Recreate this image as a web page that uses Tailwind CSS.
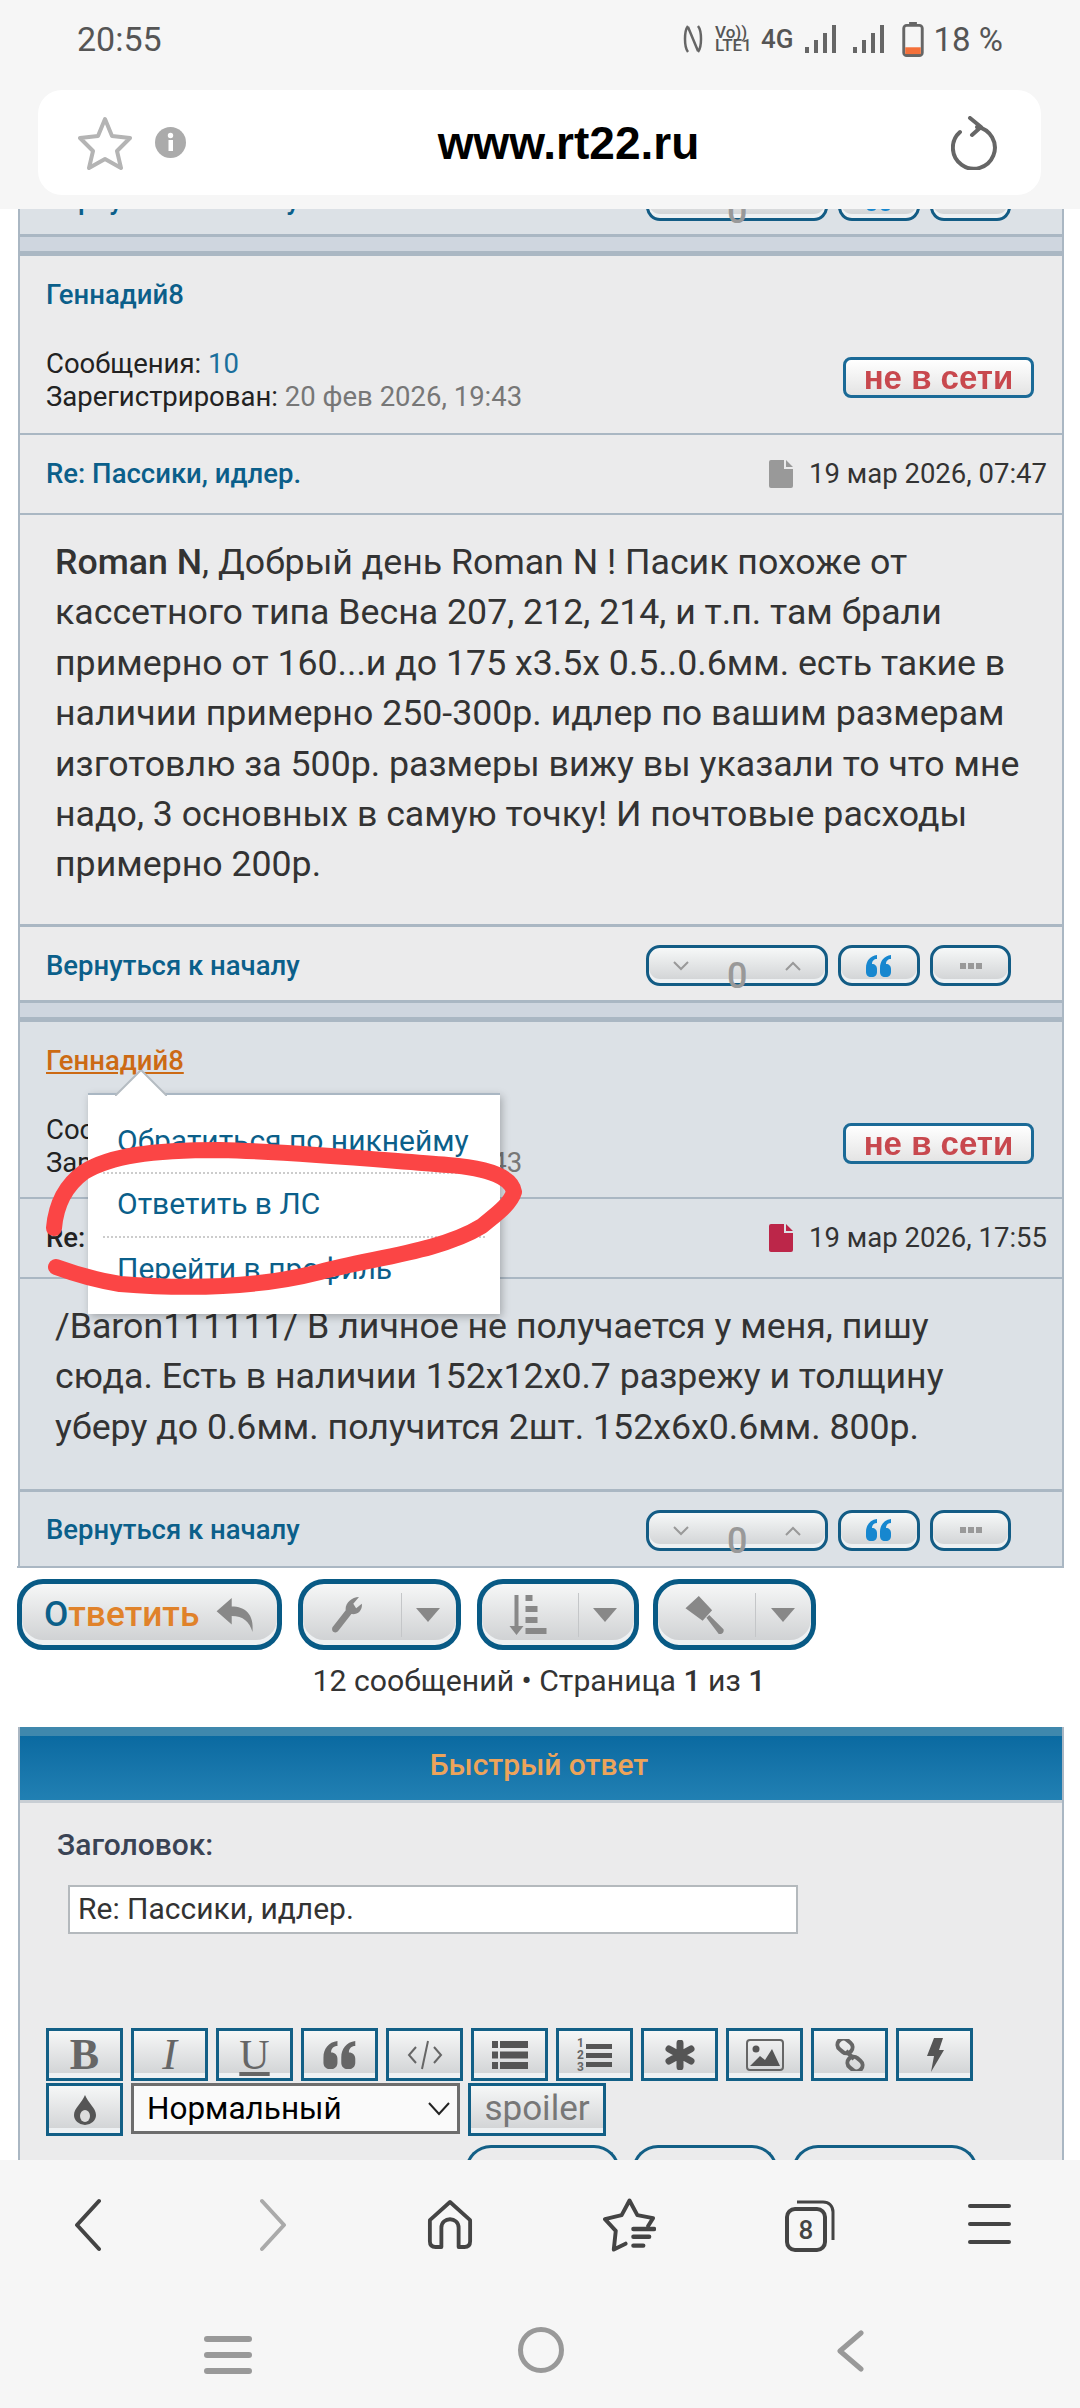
<!DOCTYPE html>
<html lang="ru">
<head>
  <meta charset="UTF-8">
  <meta name="viewport" content="width=device-width, initial-scale=1.0">
  <script src="https://cdn.jsdelivr.net/npm/@tailwindcss/browser@4"></script>
  <title>www.rt22.ru</title>
</head>
<body class="bg-white">
  <svg class="hidden">
    <symbol id="quote" viewBox="0 0 26 22"><path d="M11 0C4 1 0 6 0 13v4c0 3 2 5 5 5h1c3 0 5-2 5-5v-3c0-3-2-5-5-5 0-3 2-5 5-5zM25 0c-7 1-11 6-11 13v4c0 3 2 5 5 5h1c3 0 5-2 5-5v-3c0-3-2-5-5-5 0-3 2-5 5-5z"/></symbol>
    <symbol id="doc" viewBox="0 0 24 28"><path d="M2 0h13v9h9v17a2 2 0 0 1-2 2H2a2 2 0 0 1-2-2V2a2 2 0 0 1 2-2zM17 0l7 7h-7z"/></symbol>
    <symbol id="signal" viewBox="0 0 32 28"><rect x="0" y="22" width="4" height="6"/><rect x="9" y="15" width="4" height="13"/><rect x="18" y="8" width="4" height="20"/><rect x="27" y="0" width="4" height="28"/></symbol>
  </svg>

  <div class="relative w-[1080px] h-[2408px] flex flex-col overflow-hidden font-['Roboto',sans-serif]">

    <!-- status bar + address bar -->
    <header class="h-[209px] shrink-0 bg-[#f6f6f6] z-10">
      <div class="h-[78px] pl-[77px] pr-[77px] flex items-center justify-between text-[#555]">
        <span class="text-[34px] leading-none">20:55</span>
        <div class="flex items-center">
          <svg class="w-[20px] h-[36px]" viewBox="0 0 20 36" fill="none" stroke="#666" stroke-width="2.5"><path d="M5 5C1 10 1 26 5 31M15 5c4 5 4 21 0 26M5 6l10 24"/></svg>
          <div class="ml-[12px] w-[38px] text-[17px] leading-[13px] font-medium text-[#555]"><div>Vo))</div><div>LTE1</div></div>
          <span class="ml-[8px] text-[26px] leading-none font-medium">4G</span>
          <svg class="ml-[11px] w-[32px] h-[28px] fill-[#666]"><use href="#signal"/></svg>
          <svg class="ml-[16px] w-[32px] h-[28px] fill-[#666]"><use href="#signal"/></svg>
          <svg class="ml-[17px] w-[22px] h-[35px]" viewBox="0 0 22 36"><rect x="7" y="0" width="8" height="4" fill="#666"/><rect x="1.500" y="3.500" width="19" height="31" rx="3" fill="none" stroke="#666" stroke-width="3"/><rect x="3" y="26" width="16" height="7" fill="#f4703a"/></svg>
          <span class="ml-[10px] text-[33px] leading-none">18 %</span>
        </div>
      </div>
      <div class="mx-[38px] mt-[12px] w-[1003px] h-[105px] rounded-[24px] bg-white flex items-center justify-between pl-[40px] pr-[42px]">
        <div class="flex items-center">
          <svg class="w-[54px] h-[54px]" viewBox="0 0 54 54" fill="none" stroke="#b4b4b4" stroke-width="4" stroke-linejoin="round"><path d="M27 3l7 17 18 2-13 13 4 17-16-9-16 9 4-17L2 22l18-2z"/></svg>
          <svg class="ml-[23px] w-[31px] h-[31px]" viewBox="0 0 31 31"><circle cx="15.500" cy="15.500" r="15.500" fill="#ababab"/><rect x="13.500" y="13" width="4.500" height="11" fill="#fff"/><circle cx="15.500" cy="8.500" r="2.700" fill="#fff"/></svg>
        </div>
        <span class="font-['Liberation_Sans',sans-serif] font-bold text-[46px] leading-none text-black">www.rt22.ru</span>
        <svg class="w-[48px] h-[54px]" viewBox="0 0 48 54" fill="none" stroke="#666" stroke-width="4" stroke-linecap="round" stroke-linejoin="round"><path d="M26 11A21 21 0 1 1 9 16"/><path d="M19 2l11 9-9 8"/></svg>
      </div>
    </header>

    <!-- page content -->
    <main class="flex-1 overflow-hidden">
      <div class="-mt-[47px]">
        <div class="ml-[18px] w-[1046px] border-x-2 border-[#aab7c3]">
          <div class="h-[75px] pt-[4px] bg-[#dce1e6] border-b-[3px] border-[#aab7c3] flex items-center justify-between pl-[26px] pr-[51px]">
            <a class="text-[27.500px] font-medium text-[#0b5f8a]">Вернуться к началу</a>
            <div class="flex items-center gap-[10px]">
              <div class="relative w-[182px] h-[41px] rounded-[14px] border-[3px] border-[#135c85] bg-gradient-to-b from-[#f6f8f8] to-[#cfd1d3] shadow-[inset_0_-4px_0_#eef1f3]"><span class="absolute left-[78px] top-[8px] text-[36px] leading-[40px] font-medium text-[#999]">0</span></div>
              <div class="w-[82px] h-[41px] rounded-[14px] border-[3px] border-[#135c85] bg-gradient-to-b from-[#f6f8f8] to-[#cfd1d3] shadow-[inset_0_-4px_0_#eef1f3] flex items-center justify-center"><svg class="w-[26px] h-[22px] fill-[#1787cf]"><use href="#quote"/></svg></div>
              <div class="w-[81px] h-[41px] rounded-[14px] border-[3px] border-[#135c85] bg-gradient-to-b from-[#f6f8f8] to-[#cfd1d3] shadow-[inset_0_-4px_0_#eef1f3]"></div>
            </div>
          </div>
          <div class="h-[14px] bg-[#cfd6df]"></div>
          <div class="h-[5px] bg-[#aab7c3]"></div>

          <!-- post 1 -->
          <article class="bg-[#ebebec]">
            <div class="h-[179px] border-b-[2px] border-[#aab7c3] pl-[26px] pr-[28px]">
              <a class="block pt-[23px] text-[27.500px] leading-[32px] font-medium text-[#0b5f8a]">Геннадий8</a>
              <div class="flex items-center justify-between mt-[36px]">
                <div class="text-[27.500px] leading-[33px] text-[#222]">
                  <div>Сообщения: <span class="text-[#1a6f9c]">10</span></div>
                  <div>Зарегистрирован: <span class="text-[#777]">20 фев 2026, 19:43</span></div>
                </div>
                <div class="-mt-[5px] w-[191px] h-[41px] rounded-[8px] border-[3px] border-[#1b6a97] bg-gradient-to-b from-white to-[#e4e4e4] flex items-center justify-center font-['Liberation_Sans',sans-serif] font-bold text-[33px] leading-none text-[#c8484e] blur-[0.7px]">не в сети</div>
              </div>
            </div>
            <div class="h-[80px] border-b-[2px] border-[#aab7c3] flex items-center justify-between pl-[26px] pr-[15px]">
              <a class="text-[27.500px] font-medium text-[#0b5f8a]">Re: Пассики, идлер.</a>
              <div class="flex items-center gap-[16px] text-[27.500px] text-[#333]">
                <svg class="w-[24px] h-[28px] fill-[#999]"><use href="#doc"/></svg>
                <span>19 мар 2026, 07:47</span>
              </div>
            </div>
            <div class="h-[412px] border-b-[3px] border-[#aab7c3] pl-[35px] pr-[30px] pt-[22px] text-[35.700px] leading-[50.400px] text-[#333]">
              <b class="font-medium">Roman N</b>, Добрый день Roman N ! Пасик похоже от кассетного типа Весна 207, 212, 214, и т.п. там брали примерно от 160...и до 175 x3.5x 0.5..0.6мм. есть такие в наличии примерно 250-300р. идлер по вашим размерам изготовлю за 500р. размеры вижу вы указали то что мне надо, 3 основных в самую точку! И почтовые расходы примерно 200р.
            </div>
            <div class="h-[76px] pt-[4px] border-b-[3px] border-[#aab7c3] flex items-center justify-between pl-[26px] pr-[51px]">
              <a class="text-[27.500px] font-medium text-[#0b5f8a]">Вернуться к началу</a>
              <div class="flex items-center gap-[10px]">
                <div class="relative w-[182px] h-[41px] rounded-[14px] border-[3px] border-[#135c85] bg-gradient-to-b from-[#f6f8f8] to-[#cfd1d3] shadow-[inset_0_-4px_0_#eef1f3]">
                  <svg class="absolute left-[24px] top-[13px] w-[16px] h-[10px]" viewBox="0 0 16 10" fill="none" stroke="#999" stroke-width="2"><path d="M1 1l7 7 7-7"/></svg>
                  <svg class="absolute right-[24px] top-[13px] w-[16px] h-[10px]" viewBox="0 0 16 10" fill="none" stroke="#999" stroke-width="2"><path d="M1 9l7-7 7 7"/></svg>
                  <span class="absolute left-[78px] top-[8px] text-[36px] leading-[40px] font-medium text-[#999]">0</span>
                </div>
                <div class="w-[82px] h-[41px] rounded-[14px] border-[3px] border-[#135c85] bg-gradient-to-b from-[#f6f8f8] to-[#cfd1d3] shadow-[inset_0_-4px_0_#eef1f3] flex items-center justify-center"><svg class="w-[26px] h-[22px] fill-[#1787cf]"><use href="#quote"/></svg></div>
                <div class="w-[81px] h-[41px] rounded-[14px] border-[3px] border-[#135c85] bg-gradient-to-b from-[#f6f8f8] to-[#cfd1d3] shadow-[inset_0_-4px_0_#eef1f3] flex items-center justify-center gap-[2px]"><i class="w-[6px] h-[6px] bg-[#999]"></i><i class="w-[6px] h-[6px] bg-[#999]"></i><i class="w-[6px] h-[6px] bg-[#999]"></i></div>
              </div>
            </div>
          </article>
          <div class="h-[14px] bg-[#cfd6df]"></div>
          <div class="h-[5px] bg-[#aab7c3]"></div>

          <!-- post 2 -->
          <article class="relative bg-[#dce1e6]">
            <div class="h-[177px] border-b-[2px] border-[#aab7c3] pl-[26px] pr-[28px]">
              <a class="block pt-[23px] text-[27.500px] leading-[32px] font-medium text-[#cc6a14] underline underline-offset-2">Геннадий8</a>
              <div class="flex items-center justify-between mt-[36px]">
                <div class="text-[27.500px] leading-[33px] text-[#222]">
                  <div>Сообщения: <span class="text-[#1a6f9c]">10</span></div>
                  <div>Зарегистрирован: <span class="text-[#777]">20 фев 2026, 19:43</span></div>
                </div>
                <div class="-mt-[5px] w-[191px] h-[41px] rounded-[8px] border-[3px] border-[#1b6a97] bg-gradient-to-b from-white to-[#e4e4e4] flex items-center justify-center font-['Liberation_Sans',sans-serif] font-bold text-[33px] leading-none text-[#c8484e] blur-[0.7px]">не в сети</div>
              </div>
            </div>
            <div class="h-[80px] border-b-[2px] border-[#aab7c3] flex items-center justify-between pl-[26px] pr-[15px]">
              <a class="text-[27.500px] font-medium text-[#222]">Re: Пассики, идлер.</a>
              <div class="flex items-center gap-[16px] text-[27.500px] text-[#333]">
                <svg class="w-[24px] h-[28px] fill-[#bc2649]"><use href="#doc"/></svg>
                <span>19 мар 2026, 17:55</span>
              </div>
            </div>
            <div class="h-[213px] border-b-[3px] border-[#aab7c3] pl-[35px] pr-[30px] pt-[22px] text-[35.700px] leading-[50.400px] text-[#333]">
              /Baron111111/ В личное не получается у меня, пишу сюда. Есть в наличии 152x12x0.7 разрежу и толщину уберу до 0.6мм. получится 2шт. 152x6x0.6мм. 800р.
            </div>
            <div class="h-[74px] pt-[2px] flex items-center justify-between pl-[26px] pr-[51px]">
              <a class="text-[27.500px] font-medium text-[#0b5f8a]">Вернуться к началу</a>
              <div class="flex items-center gap-[10px]">
                <div class="relative w-[182px] h-[41px] rounded-[14px] border-[3px] border-[#135c85] bg-gradient-to-b from-[#f6f8f8] to-[#cfd1d3] shadow-[inset_0_-4px_0_#eef1f3]">
                  <svg class="absolute left-[24px] top-[13px] w-[16px] h-[10px]" viewBox="0 0 16 10" fill="none" stroke="#999" stroke-width="2"><path d="M1 1l7 7 7-7"/></svg>
                  <svg class="absolute right-[24px] top-[13px] w-[16px] h-[10px]" viewBox="0 0 16 10" fill="none" stroke="#999" stroke-width="2"><path d="M1 9l7-7 7 7"/></svg>
                  <span class="absolute left-[78px] top-[8px] text-[36px] leading-[40px] font-medium text-[#999]">0</span>
                </div>
                <div class="w-[82px] h-[41px] rounded-[14px] border-[3px] border-[#135c85] bg-gradient-to-b from-[#f6f8f8] to-[#cfd1d3] shadow-[inset_0_-4px_0_#eef1f3] flex items-center justify-center"><svg class="w-[26px] h-[22px] fill-[#1787cf]"><use href="#quote"/></svg></div>
                <div class="w-[81px] h-[41px] rounded-[14px] border-[3px] border-[#135c85] bg-gradient-to-b from-[#f6f8f8] to-[#cfd1d3] shadow-[inset_0_-4px_0_#eef1f3] flex items-center justify-center gap-[2px]"><i class="w-[6px] h-[6px] bg-[#999]"></i><i class="w-[6px] h-[6px] bg-[#999]"></i><i class="w-[6px] h-[6px] bg-[#999]"></i></div>
              </div>
            </div>

            <!-- profile popup -->
            <div class="absolute left-[68px] top-[71px] w-[412px] h-[221px] bg-white border-t-2 border-[#aab7c3] shadow-[2px_3px_8px_rgba(0,0,0,0.25)] pt-[21px] px-[15px] text-[30px] text-[#0b5f8a]">
              <svg class="absolute left-[27px] -top-[25px] w-[52px] h-[26px]" viewBox="0 0 52 26"><path d="M0 26L26 0l26 26z" fill="#fff"/><path d="M0 26L26 0l26 26" fill="none" stroke="#b5bcc2" stroke-width="2"/></svg>
              <div class="h-[58px] pl-[14px] leading-[50px] border-b-2 border-dotted border-[#ccc]">Обратиться по никнейму</div>
              <div class="h-[64px] pl-[14px] leading-[60px] border-b-2 border-dotted border-[#ccc]">Ответить в ЛС</div>
              <div class="pl-[14px] leading-[62px]">Перейти в профиль</div>
            </div>
          </article>
        </div>
        <div class="ml-[17px] w-[1047px] h-[2px] bg-[#aab7c3]"></div>

        <!-- action buttons -->
        <div class="mt-[11px] ml-[17px] flex gap-[16px]">
          <div class="w-[265px] h-[71px] rounded-[26px] border-[5px] border-[#085a85] bg-gradient-to-b from-[#f6f7f7] to-[#cdcfd1] shadow-[inset_0_-5px_0_#eef1f3] flex items-center pl-[22px] text-[35.300px] font-medium text-[#e0822a]">
            <span><span class="text-[#0b5f8a]">О</span>тветить</span>
            <svg class="ml-[17px] w-[39px] h-[34px] fill-[#888]" viewBox="0 0 40 36"><path d="M0 14L16 0v9c14 0 24 8 22 27-3-11-10-17-22-17v9z"/></svg>
          </div>
          <div class="w-[163px] h-[71px] rounded-[26px] border-[5px] border-[#085a85] bg-gradient-to-b from-[#f6f7f7] to-[#cdcfd1] shadow-[inset_0_-5px_0_#eef1f3] flex items-center pl-[29px]">
            <svg class="w-[35px] h-[36px] fill-[#888]" viewBox="0 0 36 38"><path d="M28 0l-6 7 3 5 6-5c1 7-4 12-11 11L6 36c-2 3-8 1-6-4l14-18C13 7 20 0 28 0z"/></svg>
            <span class="ml-[34px] w-[1px] h-[44px] bg-[#c4c6c8]"></span>
            <svg class="ml-[14px] w-[24px] h-[14px] fill-[#888]" viewBox="0 0 24 14"><path d="M0 0h24L12 14z"/></svg>
          </div>
          <div class="w-[162px] -mr-[2px] h-[71px] rounded-[26px] border-[5px] border-[#085a85] bg-gradient-to-b from-[#f6f7f7] to-[#cdcfd1] shadow-[inset_0_-5px_0_#eef1f3] flex items-center pl-[26px]">
            <svg class="w-[39px] h-[40px] fill-[#888]" viewBox="0 0 38 40"><path d="M6 0h4v31h5l-7 9-7-9h5zM17 0h7v6h-7zM17 11h12v6H17zM17 22h12v6H17zM17 33h21v6H17z"/></svg>
            <span class="ml-[31px] w-[1px] h-[44px] bg-[#c4c6c8]"></span>
            <svg class="ml-[14px] w-[24px] h-[14px] fill-[#888]" viewBox="0 0 24 14"><path d="M0 0h24L12 14z"/></svg>
          </div>
          <div class="w-[163px] h-[71px] rounded-[26px] border-[5px] border-[#085a85] bg-gradient-to-b from-[#f6f7f7] to-[#cdcfd1] shadow-[inset_0_-5px_0_#eef1f3] flex items-center pl-[27px]">
            <svg class="w-[39px] h-[38px] fill-[#888]" viewBox="0 0 40 40"><path d="M14 0l14 15-10 11L0 13zM22 23l3-3 15 15c1 3-2 6-5 5z"/></svg>
            <span class="ml-[31px] w-[1px] h-[44px] bg-[#c4c6c8]"></span>
            <svg class="ml-[15px] w-[24px] h-[14px] fill-[#888]" viewBox="0 0 24 14"><path d="M0 0h24L12 14z"/></svg>
          </div>
        </div>
        <div class="mt-[13px] pr-[2px] text-center text-[30.200px] leading-[36px] text-[#333]">12 сообщений • Страница <b class="font-medium">1</b> из <b class="font-medium">1</b></div>

        <!-- quick reply -->
        <section class="mt-[28px] ml-[18px] w-[1046px] border-x-2 border-[#aab7c3] bg-[#ebebec]">
          <div class="h-[9px] bg-[#3f88ad]"></div>
          <div class="h-[64px] pb-[8px] pr-[4px] bg-gradient-to-b from-[#0a6aa1] to-[#2180b3] flex items-center justify-center text-[30px] font-medium text-[#eda45a]">Быстрый ответ</div>
          <div class="h-[3px] bg-[#c8ced4]"></div>
          <div class="pt-[24px] pl-[37px] text-[30px] leading-[36px] font-medium text-[#3a4354]">Заголовок:</div>
          <div class="mt-[22px] ml-[48px] w-[730px] h-[49px] bg-white border-2 border-[#b4b9bd] pl-[8px] text-[30px] leading-[44px] text-[#333]">Re: Пассики, идлер.</div>

          <div class="mt-[94px] ml-[26px] w-[960px] flex flex-wrap gap-x-[8px] gap-y-[2px] text-[#666]">
            <div class="w-[77px] h-[53px] border-[3px] border-[#125f86] bg-gradient-to-b from-[#f6f7f7] to-[#cfd1d3] shadow-[inset_0_-5px_0_#eef1f3] flex items-center justify-center font-['Liberation_Serif',serif] font-bold text-[44px] leading-none">B</div>
            <div class="w-[77px] h-[53px] border-[3px] border-[#125f86] bg-gradient-to-b from-[#f6f7f7] to-[#cfd1d3] shadow-[inset_0_-5px_0_#eef1f3] flex items-center justify-center font-['Liberation_Serif',serif] italic text-[44px] leading-none">I</div>
            <div class="w-[77px] h-[53px] border-[3px] border-[#125f86] bg-gradient-to-b from-[#f6f7f7] to-[#cfd1d3] shadow-[inset_0_-5px_0_#eef1f3] flex items-center justify-center font-['Liberation_Serif',serif] underline text-[42px] leading-none">U</div>
            <div class="w-[77px] h-[53px] border-[3px] border-[#125f86] bg-gradient-to-b from-[#f6f7f7] to-[#cfd1d3] shadow-[inset_0_-5px_0_#eef1f3] flex items-center justify-center"><svg class="w-[34px] h-[28px] fill-[#666]"><use href="#quote"/></svg></div>
            <div class="w-[77px] h-[53px] border-[3px] border-[#125f86] bg-gradient-to-b from-[#f6f7f7] to-[#cfd1d3] shadow-[inset_0_-5px_0_#eef1f3] flex items-center justify-center"><svg class="w-[36px] h-[30px]" viewBox="0 0 36 30" fill="none" stroke="#666" stroke-width="2"><path d="M9 7L2 15l7 8M27 7l7 8-7 8M21 1l-6 28"/></svg></div>
            <div class="w-[77px] h-[53px] border-[3px] border-[#125f86] bg-gradient-to-b from-[#f6f7f7] to-[#cfd1d3] shadow-[inset_0_-5px_0_#eef1f3] flex items-center justify-center"><svg class="w-[36px] h-[28px] fill-[#555]" viewBox="0 0 36 28"><path d="M0 0h6v7H0zM8 0h28v7H8zM0 10.500h6v7H0zM8 10.500h28v7H8zM0 21h6v7H0zM8 21h28v7H8z"/></svg></div>
            <div class="w-[77px] h-[53px] border-[3px] border-[#125f86] bg-gradient-to-b from-[#f6f7f7] to-[#cfd1d3] shadow-[inset_0_-5px_0_#eef1f3] flex items-center justify-center gap-[2px]">
              <div class="text-[12px] leading-[12px] font-bold text-center"><div>1</div><div>2</div><div>3</div></div>
              <svg class="w-[26px] h-[28px] fill-[#555]" viewBox="0 0 26 28"><path d="M0 3h26v5H0zM0 12h26v5H0zM0 21h26v5H0z"/></svg>
            </div>
            <div class="w-[77px] h-[53px] border-[3px] border-[#125f86] bg-gradient-to-b from-[#f6f7f7] to-[#cfd1d3] shadow-[inset_0_-5px_0_#eef1f3] flex items-center justify-center"><svg class="w-[30px] h-[30px]" viewBox="0 0 30 30" fill="none" stroke="#555" stroke-width="7" stroke-linecap="round"><path d="M15 3v24M4 9l22 12M26 9L4 21"/></svg></div>
            <div class="w-[77px] h-[53px] border-[3px] border-[#125f86] bg-gradient-to-b from-[#f6f7f7] to-[#cfd1d3] shadow-[inset_0_-5px_0_#eef1f3] flex items-center justify-center"><svg class="w-[38px] h-[32px]" viewBox="0 0 38 32"><rect x="1" y="1" width="36" height="30" rx="3" fill="none" stroke="#666" stroke-width="2"/><circle cx="10" cy="10" r="3.500" fill="#555"/><path d="M4 27l10-10 5 4 7-11 8 17z" fill="#555"/></svg></div>
            <div class="w-[77px] h-[53px] border-[3px] border-[#125f86] bg-gradient-to-b from-[#f6f7f7] to-[#cfd1d3] shadow-[inset_0_-5px_0_#eef1f3] flex items-center justify-center"><svg class="w-[34px] h-[32px]" viewBox="0 0 34 32" fill="none" stroke="#666" stroke-width="4"><rect x="4" y="1" width="16" height="12" rx="6" transform="rotate(40 12 7)"/><rect x="14" y="19" width="16" height="12" rx="6" transform="rotate(40 22 25)"/><path d="M13 12l8 8"/></svg></div>
            <div class="w-[77px] h-[53px] border-[3px] border-[#125f86] bg-gradient-to-b from-[#f6f7f7] to-[#cfd1d3] shadow-[inset_0_-5px_0_#eef1f3] flex items-center justify-center"><svg class="w-[18px] h-[34px] fill-[#555]" viewBox="0 0 18 34"><path d="M8 0h9l-4 12h5L5 34l3-16H1z"/></svg></div>
            <div class="w-[77px] h-[53px] border-[3px] border-[#125f86] bg-gradient-to-b from-[#f6f7f7] to-[#cfd1d3] shadow-[inset_0_-5px_0_#eef1f3] flex items-center justify-center"><svg class="w-[22px] h-[30px]" viewBox="0 0 22 30"><path d="M11 0c3 8 11 13 11 20a11 10 0 0 1-22 0C0 13 8 8 11 0z" fill="#555"/><ellipse cx="11" cy="21" rx="5" ry="6" fill="#ddd"/></svg></div>
            <div class="w-[329px] h-[51px] border-[3px] border-[#6d6d6d] bg-[#fafafa] flex items-center justify-between pl-[13px] pr-[7px] text-[31.500px] text-black">
              <span>Нормальный</span>
              <svg class="w-[22px] h-[14px]" viewBox="0 0 22 14" fill="none" stroke="#222" stroke-width="2"><path d="M1 1l10 11L21 1"/></svg>
            </div>
            <div class="w-[138px] h-[53px] border-[3px] border-[#125f86] bg-gradient-to-b from-[#f6f7f7] to-[#cfd1d3] shadow-[inset_0_-5px_0_#eef1f3] flex items-center justify-center text-[35px] text-[#777]">spoiler</div>
          </div>

          <div class="mt-[9px] ml-[445px] flex">
            <div class="w-[155px] h-[50px] rounded-t-[26px] border-[3px] border-b-0 border-[#125f86]"></div>
            <div class="ml-[12px] w-[146px] h-[50px] rounded-t-[26px] border-[3px] border-b-0 border-[#125f86]"></div>
            <div class="ml-[14px] w-[186px] h-[50px] rounded-t-[26px] border-[3px] border-b-0 border-[#125f86]"></div>
          </div>
        </section>
      </div>
    </main>

    <!-- browser toolbar + system nav -->
    <footer class="h-[248px] shrink-0 bg-[#f6f6f6] z-10">
      <div class="h-[128px] pt-[38px] pl-[74px] flex items-start">
        <svg class="shrink-0 w-[27px] h-[54px]" viewBox="0 0 27 54" fill="none" stroke="#444" stroke-width="4" stroke-linecap="round" stroke-linejoin="round"><path d="M25 3L3 27l22 24"/></svg>
        <svg class="shrink-0 ml-[159px] w-[27px] h-[54px]" viewBox="0 0 27 54" fill="none" stroke="#aaa" stroke-width="4" stroke-linecap="round" stroke-linejoin="round"><path d="M2 3l22 24L2 51"/></svg>
        <svg class="shrink-0 ml-[140px] w-[46px] h-[52px]" viewBox="0 0 48 52" fill="none" stroke="#444" stroke-width="4" stroke-linejoin="round"><path d="M24 3L3 22v22c0 4 2 6 6 6h6V30c0-12 18-12 18 0v20h6c4 0 6-2 6-6V22z"/></svg>
        <svg class="shrink-0 ml-[130px] w-[53px] h-[54px]" viewBox="0 0 54 54" fill="none" stroke="#444" stroke-width="4" stroke-linejoin="round" stroke-linecap="round"><path d="M23 46L11 52 13 33 2 21 19 17 27 2 35 17 51 20 46 28"/><path d="M31 31h21M31 39h16M31 48h10" stroke-width="4.500"/></svg>
        <div class="relative shrink-0 ml-[129px] w-[50px] h-[54px]">
          <svg class="absolute inset-0" viewBox="0 0 50 54" fill="none" stroke="#444" stroke-width="3"><rect x="2" y="11" width="38" height="41" rx="8" stroke-width="4"/><path d="M12 4h26c6 0 10 4 10 10v28"/></svg>
          <span class="absolute left-[2px] top-[12px] w-[38px] text-center text-[26px] leading-[40px] font-medium text-[#444]">8</span>
        </div>
        <div class="shrink-0 ml-[133px] mt-[6px] w-[43px] flex flex-col gap-[14px]">
          <i class="h-[4px] rounded-full bg-[#444]"></i><i class="h-[4px] rounded-full bg-[#444]"></i><i class="h-[4px] rounded-full bg-[#444]"></i>
        </div>
      </div>
      <div class="pl-[204px] pt-[39px] flex items-start">
        <div class="mt-[9px] w-[48px] flex flex-col gap-[10px]">
          <i class="h-[6px] rounded-full bg-[#999]"></i><i class="h-[6px] rounded-full bg-[#999]"></i><i class="h-[6px] rounded-full bg-[#999]"></i>
        </div>
        <div class="ml-[266px] w-[46px] h-[46px] rounded-full border-[5px] border-[#999]"></div>
        <svg class="ml-[272px] mt-[3px] w-[28px] h-[42px]" viewBox="0 0 28 42" fill="none" stroke="#999" stroke-width="5" stroke-linecap="round" stroke-linejoin="round"><path d="M25 3L4 21l21 18"/></svg>
      </div>
    </footer>

    <!-- red marker stroke drawn on the screenshot -->
    <svg class="absolute inset-0 z-20 pointer-events-none" width="1080" height="2408" viewBox="0 0 1080 2408" fill="none">
      <path d="M54 1228C56 1205 66 1185 84 1172C110 1156 150 1150 220 1150C300 1152 380 1160 448 1165C490 1168 512 1178 514 1192C510 1205 495 1215 482 1226C440 1252 370 1258 320 1272C250 1290 170 1288 120 1284C95 1280 75 1274 56 1267" stroke="#fb4545" stroke-width="16" stroke-linecap="round" stroke-linejoin="round"/>
    </svg>
  </div>
</body>
</html>
